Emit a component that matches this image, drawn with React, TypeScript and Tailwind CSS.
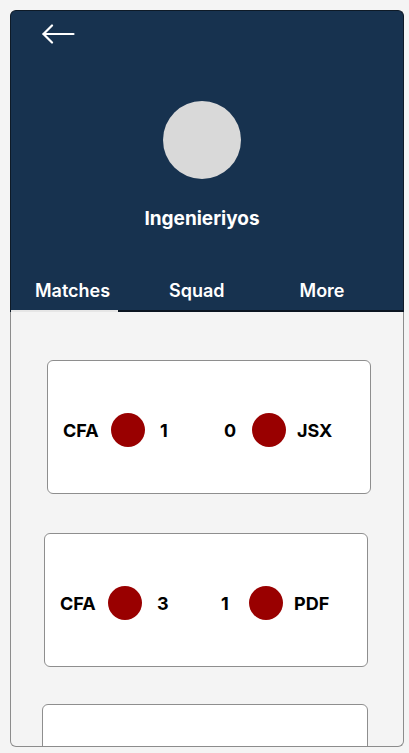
const matches = [
   { home: 'CFA', away: 'JSX', homeScore: 1, awayScore: 0, shift: 'ml-[36px] w-[324px] mt-[48px]' },
   { home: 'CFA', away: 'PDF', homeScore: 3, awayScore: 1, shift: 'ml-[33px] w-[324px] mt-[39px] h-[133px]' },
   { home: '', away: '', homeScore: null, awayScore: null, shift: 'ml-[31px] w-[326px] mt-[37px]' },
];

const Badge = () => <div className='w-[34px] h-[34px] rounded-full bg-[#990000] shrink-0' />;

const MatchCard = ({ match }: { match: typeof matches[number] }) => (
   <div className={`h-[134px] ${match.shift} shrink-0 bg-white border border-[#8e8e8e] rounded-[6px] flex items-center pl-[15px] pt-[6px] text-[18px] font-bold text-black`}>
      {match.home && (
         <>
            <span className='w-[48px]'>{match.home}</span>
            <Badge />
            <span className='ml-[15px] w-[14px]'>{match.homeScore}</span>
            <span className='ml-[50px] w-[14px]'>{match.awayScore}</span>
            <div className='ml-[14px]'><Badge /></div>
            <span className='ml-[11px]'>{match.away}</span>
         </>
      )}
   </div>
);

export default function App() {
   return (
      <div className='min-h-screen bg-[#f4f4f4] pt-[10px] pl-[10px]' style={{ fontFamily: 'Inter, "Noto Sans", sans-serif' }}>
         <div className='w-[394px] h-[737px] flex flex-col'>
            <div className='h-[302px] shrink-0 bg-[#17324f] border border-b-0 border-[#0e1a27] rounded-t-[6px] flex flex-col'>
               <div className='pl-[30px] pt-[13px]'>
                  <svg width='34' height='20' viewBox='0 0 34 20' fill='none' stroke='white' strokeWidth='2.2' strokeLinecap='round' strokeLinejoin='round'>
                     <path d='M2.5 10H32.5' />
                     <path d='M11 1.5L2.5 10L11 18.5' />
                  </svg>
               </div>
               <div className='flex flex-col items-center pr-[10px]'>
                  <div className='mt-[57px] w-[78px] h-[78px] rounded-full bg-[#d9d9d9]' />
                  <div className='mt-[28px] text-white font-bold text-[19px] leading-[24px]'>Ingenieriyos</div>
               </div>
               <div className='mt-auto flex h-[43px] text-white font-semibold text-[18px]'>
                  <div className='w-[107px] pl-[24px] pt-px flex items-center border-b-2 border-[#e6e6e6]'>Matches</div>
                  <div className='flex-1 flex items-center pt-px border-b-2 border-[#0b1521]'>
                     <span className='ml-[51px]'>Squad</span>
                     <span className='ml-[75px]'>More</span>
                  </div>
               </div>
            </div>
            <div className='flex-1 bg-[#f4f4f4] border border-t-0 border-[#8c8c8c] rounded-b-[6px] overflow-hidden flex flex-col'>
               {matches.map((m, i) => <MatchCard key={i} match={m} />)}
            </div>
         </div>
      </div>
   );
}
